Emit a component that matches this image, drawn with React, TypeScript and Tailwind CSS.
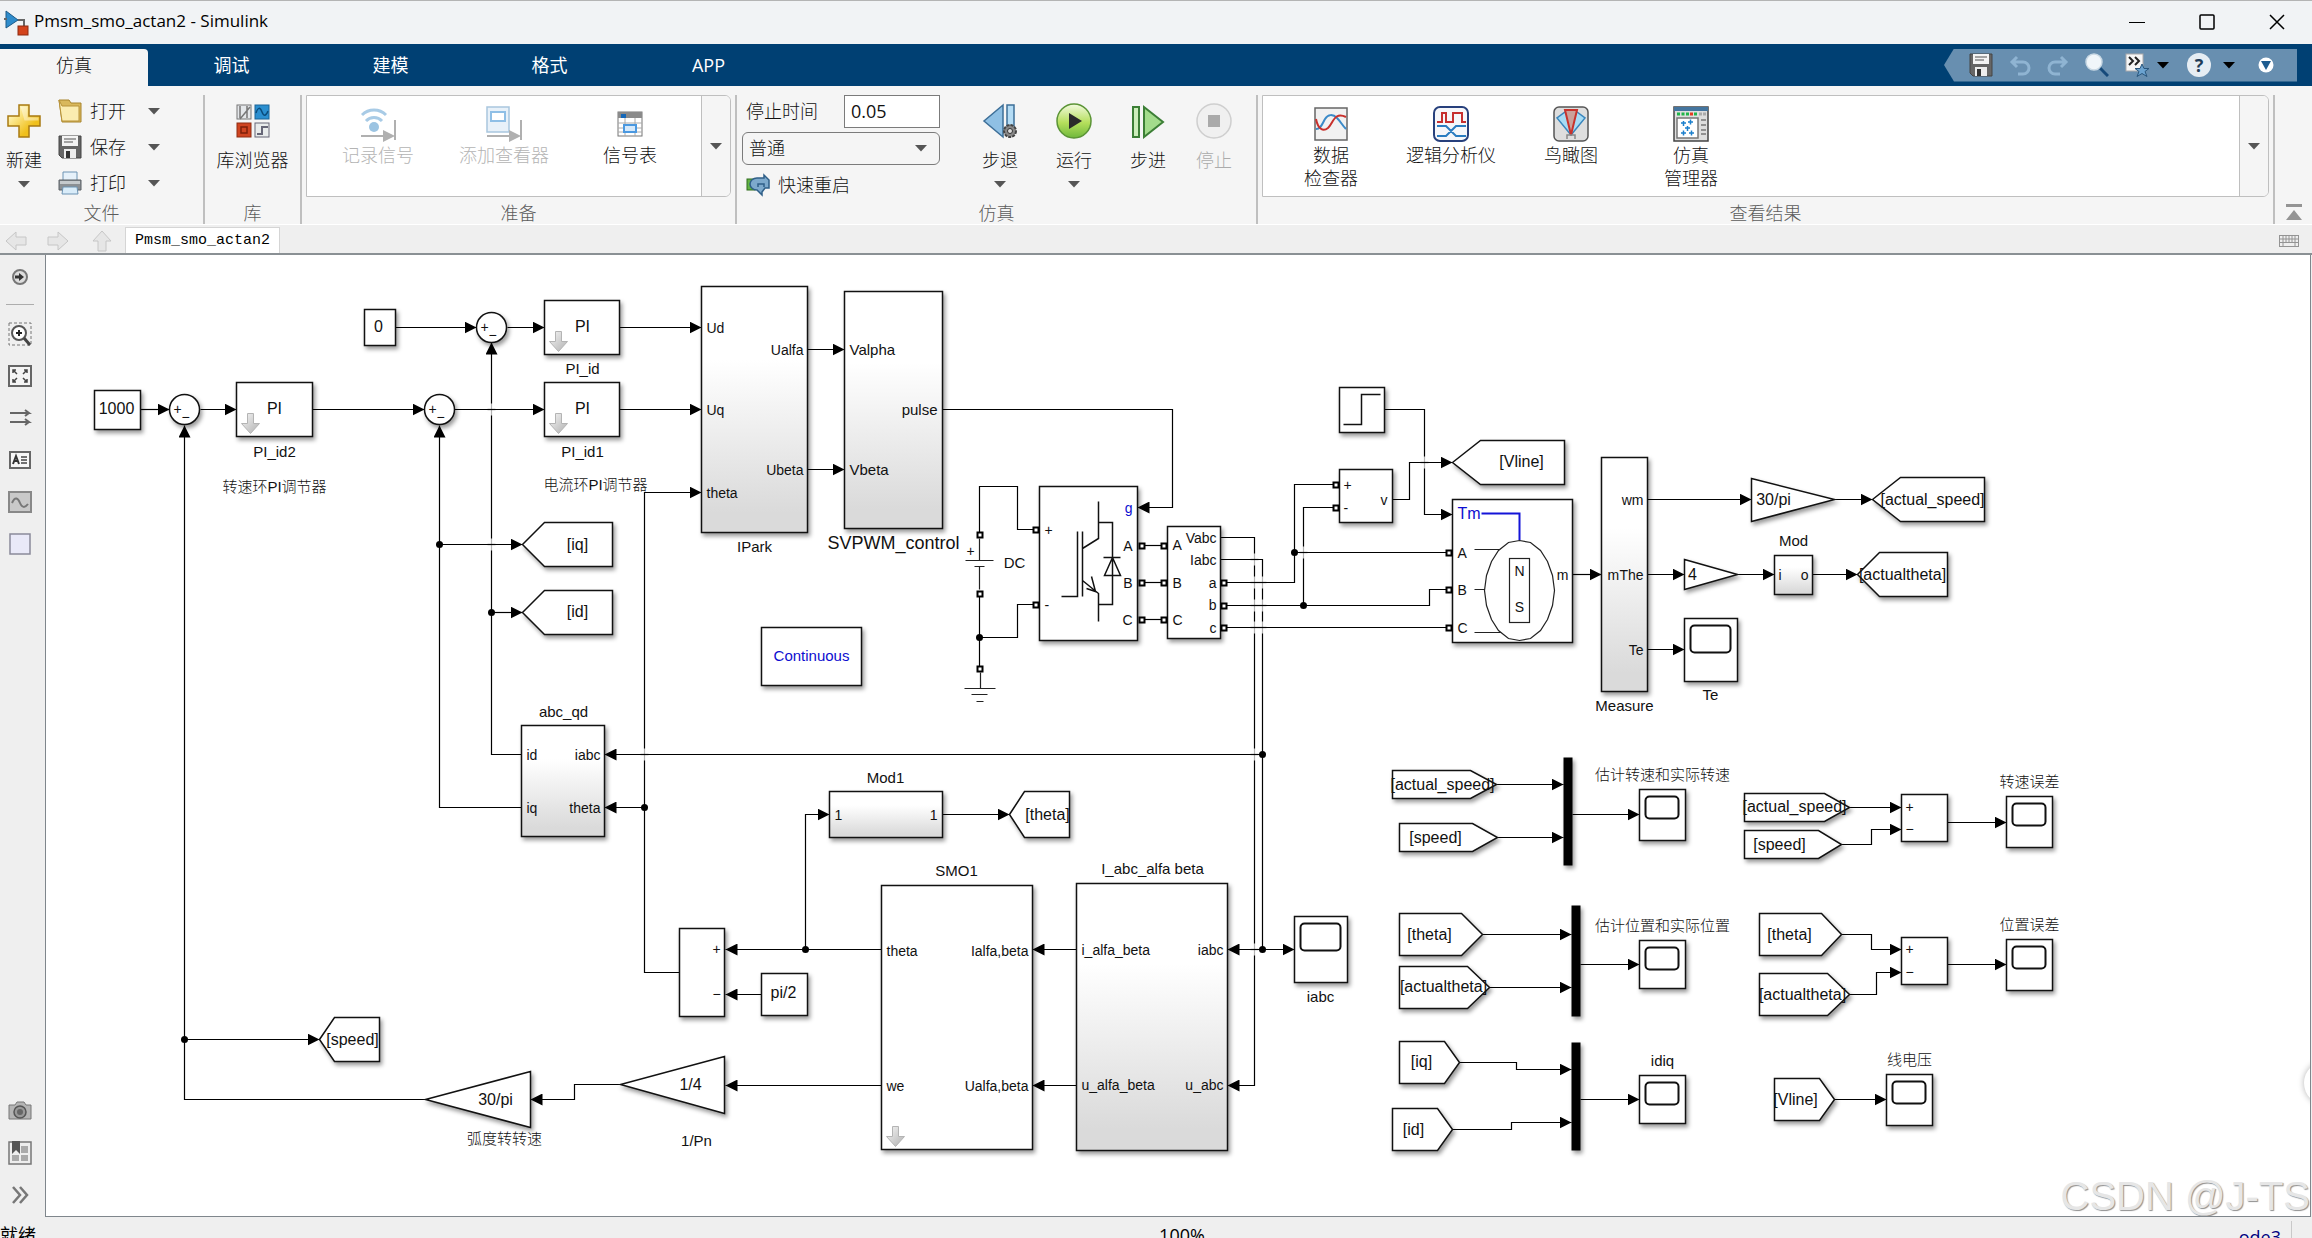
import { useState } from 'react';
import type { ReactNode } from 'react';

type Point = [number, number];

// ---------------------------------------------------------------- diagram data

interface Box {
  x: number;
  y: number;
  w: number;
  h: number;
  shaded?: boolean;
  mask?: boolean;
}

const boxes: Box[] = [
  { x: 365, y: 310, w: 31, h: 36 },
  { x: 545, y: 301, w: 75, h: 54, mask: true },
  { x: 95, y: 391, w: 46, h: 39 },
  { x: 237, y: 383, w: 76, h: 54, mask: true },
  { x: 545, y: 383, w: 75, h: 54, mask: true },
  { x: 702, y: 287, w: 106, h: 246, shaded: true },
  { x: 845, y: 292, w: 98, h: 237, shaded: true },
  { x: 1040, y: 487, w: 98, h: 154 },
  { x: 1168, y: 527, w: 53, h: 112 },
  { x: 762, y: 628, w: 100, h: 58 },
  { x: 1340, y: 388, w: 45, h: 45 },
  { x: 1340, y: 470, w: 53, h: 53 },
  { x: 1453, y: 500, w: 120, h: 143 },
  { x: 1602, y: 458, w: 46, h: 234, shaded: true },
  { x: 1775, y: 556, w: 38, h: 39, shaded: true },
  { x: 522, y: 726, w: 83, h: 111, shaded: true },
  { x: 680, y: 929, w: 45, h: 88 },
  { x: 762, y: 974, w: 46, h: 42 },
  { x: 830, y: 792, w: 113, h: 46, shaded: true },
  { x: 882, y: 886, w: 151, h: 264, mask: true },
  { x: 1077, y: 884, w: 151, h: 267, shaded: true },
  { x: 1902, y: 795, w: 46, h: 47 },
  { x: 1902, y: 938, w: 46, h: 47 },
];

const scopes: Box[] = [
  { x: 1685, y: 619, w: 53, h: 63 },
  { x: 1295, y: 917, w: 53, h: 66 },
  { x: 1640, y: 790, w: 46, h: 51 },
  { x: 1640, y: 941, w: 46, h: 48 },
  { x: 1640, y: 1076, w: 46, h: 48 },
  { x: 2007, y: 797, w: 46, h: 51 },
  { x: 2007, y: 940, w: 46, h: 51 },
  { x: 1887, y: 1075, w: 46, h: 51 },
];

const muxes: Box[] = [
  { x: 1564, y: 758, w: 9, h: 108 },
  { x: 1572, y: 906, w: 9, h: 111 },
  { x: 1572, y: 1043, w: 9, h: 108 },
];

// goto tags: tip on the left
const gotoTags: { tip: Point; shoulder: number; right: number; half: number }[] = [
  { tip: [523, 545], shoulder: 545, right: 613, half: 22 },
  { tip: [523, 613], shoulder: 545, right: 613, half: 22 },
  { tip: [320, 1040], shoulder: 335, right: 380, half: 22 },
  { tip: [1010, 815], shoulder: 1025, right: 1070, half: 23 },
  { tip: [1453, 463], shoulder: 1481, right: 1565, half: 22 },
  { tip: [1873, 500], shoulder: 1901, right: 1985, half: 22 },
  { tip: [1858, 575], shoulder: 1880, right: 1948, half: 22 },
];

// from tags: tip on the right
const fromTags: { left: number; shoulder: number; tip: Point; half: number }[] = [
  { left: 1393, shoulder: 1471, tip: [1497, 785], half: 14 },
  { left: 1400, shoulder: 1473, tip: [1498, 838], half: 14 },
  { left: 1745, shoulder: 1825, tip: [1850, 808], half: 14 },
  { left: 1745, shoulder: 1819, tip: [1842, 845], half: 14 },
  { left: 1400, shoulder: 1462, tip: [1483, 935], half: 21 },
  { left: 1400, shoulder: 1468, tip: [1490, 988], half: 21 },
  { left: 1760, shoulder: 1822, tip: [1842, 935], half: 21 },
  { left: 1760, shoulder: 1828, tip: [1850, 995], half: 21 },
  { left: 1400, shoulder: 1445, tip: [1460, 1063], half: 21 },
  { left: 1393, shoulder: 1438, tip: [1453, 1130], half: 21 },
  { left: 1775, shoulder: 1820, tip: [1835, 1100], half: 21 },
];

const gains: string[] = [
  '1752,479 1835,500 1752,522',
  '1685,560 1738,575 1685,590',
  '531,1072 426,1100 531,1128',
  '725,1057 621,1085 725,1114',
];

const sums: Point[] = [[492, 328], [185, 410], [440, 410]];

// arrow wires
const wires: Point[][] = [
  [[396, 328], [477, 328]],
  [[508, 328], [545, 328]],
  [[620, 328], [702, 328]],
  [[141, 410], [170, 410]],
  [[201, 410], [237, 410]],
  [[313, 410], [425, 410]],
  [[455, 410], [545, 410]],
  [[620, 410], [702, 410]],
  [[808, 350], [845, 350]],
  [[808, 470], [845, 470]],
  [[943, 410], [1173, 410], [1173, 508], [1138, 508]],
  [[680, 973], [645, 973], [645, 493], [702, 493]],
  [[645, 808], [605, 808]],
  [[522, 755], [492, 755], [492, 343]],
  [[522, 808], [440, 808], [440, 426]],
  [[440, 545], [523, 545]],
  [[492, 613], [523, 613]],
  [[426, 1100], [185, 1100], [185, 426]],
  [[185, 1040], [320, 1040]],
  [[621, 1085], [575, 1085], [575, 1100], [531, 1100]],
  [[882, 1086], [726, 1086]],
  [[882, 950], [726, 950]],
  [[762, 995], [726, 995]],
  [[806, 950], [806, 815], [830, 815]],
  [[943, 815], [1010, 815]],
  [[1077, 950], [1033, 950]],
  [[1077, 1086], [1033, 1086]],
  [[1221, 538], [1255, 538], [1255, 1086], [1228, 1086]],
  [[1221, 560], [1263, 560], [1263, 950], [1295, 950]],
  [[1263, 950], [1228, 950]],
  [[1263, 755], [605, 755]],
  [[1385, 410], [1425, 410], [1425, 515], [1453, 515]],
  [[1393, 500], [1410, 500], [1410, 463], [1453, 463]],
  [[1573, 575], [1602, 575]],
  [[1648, 500], [1752, 500]],
  [[1835, 500], [1873, 500]],
  [[1648, 575], [1685, 575]],
  [[1738, 575], [1775, 575]],
  [[1813, 575], [1858, 575]],
  [[1648, 650], [1685, 650]],
  [[1497, 785], [1564, 785]],
  [[1498, 838], [1564, 838]],
  [[1573, 815], [1640, 815]],
  [[1850, 808], [1902, 808]],
  [[1842, 845], [1872, 845], [1872, 830], [1902, 830]],
  [[1948, 823], [2007, 823]],
  [[1483, 935], [1572, 935]],
  [[1490, 988], [1572, 988]],
  [[1581, 965], [1640, 965]],
  [[1842, 935], [1872, 935], [1872, 950], [1902, 950]],
  [[1850, 995], [1877, 995], [1877, 973], [1902, 973]],
  [[1948, 965], [2007, 965]],
  [[1460, 1063], [1517, 1063], [1517, 1070], [1572, 1070]],
  [[1453, 1130], [1512, 1130], [1512, 1123], [1572, 1123]],
  [[1581, 1100], [1640, 1100]],
  [[1835, 1100], [1887, 1100]],
];

// electrical connections, no arrow
const conductors: Point[][] = [
  [[980, 535], [980, 487], [1018, 487], [1018, 530], [1036, 530]],
  [[980, 594], [980, 669]],
  [[980, 638], [1018, 638], [1018, 605], [1036, 605]],
  [[1141, 546], [1164, 546]],
  [[1141, 583], [1164, 583]],
  [[1141, 620], [1164, 620]],
  [[1224, 583], [1295, 583], [1295, 485], [1336, 485]],
  [[1295, 553], [1449, 553]],
  [[1224, 606], [1430, 606], [1430, 590], [1449, 590]],
  [[1304, 606], [1304, 508], [1336, 508]],
  [[1224, 628], [1449, 628]],
];

const crossings: Point[] = [
  [492, 410], [492, 545], [645, 755], [1255, 560], [1255, 583], [1263, 583],
  [1255, 606], [1263, 606], [1255, 628], [1263, 628], [1255, 755], [1255, 950],
  [1425, 463], [1304, 553],
];

const dots: Point[] = [
  [440, 545], [492, 613], [185, 1040], [645, 808], [806, 950], [1263, 755],
  [1263, 950], [980, 638], [1295, 553], [1304, 606],
];

const ports: Point[] = [
  [980, 535], [980, 594], [980, 669], [1036, 530], [1036, 605],
  [1142, 546], [1142, 583], [1142, 620], [1164, 546], [1164, 583], [1164, 620],
  [1224, 583], [1224, 606], [1224, 628], [1336, 485], [1336, 508],
  [1449, 553], [1449, 590], [1449, 628],
];

type Anchor = 'start' | 'middle' | 'end';
type Label = [text: string, x: number, y: number, anchor?: Anchor, blue?: boolean];

const portLabels: Label[] = [
  ['Ud', 707, 329, 'start'],
  ['Uq', 707, 411, 'start'],
  ['theta', 707, 494, 'start'],
  ['Ualfa', 804, 351, 'end'],
  ['Ubeta', 804, 471, 'end'],
  ['id', 527, 756, 'start'],
  ['iq', 527, 809, 'start'],
  ['iabc', 601, 756, 'end'],
  ['theta', 601, 809, 'end'],
  ['1', 835, 816, 'start'],
  ['1', 938, 816, 'end'],
  ['theta', 887, 952, 'start'],
  ['we', 887, 1087, 'start'],
  ['Ialfa,beta', 1029, 952, 'end'],
  ['Ualfa,beta', 1029, 1087, 'end'],
  ['i_alfa_beta', 1082, 951, 'start'],
  ['u_alfa_beta', 1082, 1086, 'start'],
  ['iabc', 1224, 951, 'end'],
  ['u_abc', 1224, 1086, 'end'],
  ['+', 1045, 531, 'start'],
  ['-', 1045, 606, 'start'],
  ['+', 971, 552],
  ['g', 1133, 509, 'end', true],
  ['A', 1133, 547, 'end'],
  ['B', 1133, 584, 'end'],
  ['C', 1133, 621, 'end'],
  ['A', 1173, 546, 'start'],
  ['B', 1173, 584, 'start'],
  ['C', 1173, 621, 'start'],
  ['Vabc', 1217, 539, 'end'],
  ['Iabc', 1217, 561, 'end'],
  ['a', 1217, 584, 'end'],
  ['b', 1217, 606, 'end'],
  ['c', 1217, 629, 'end'],
  ['+', 1344, 486, 'start'],
  ['-', 1344, 509, 'start'],
  ['v', 1388, 501, 'end'],
  ['A', 1458, 554, 'start'],
  ['B', 1458, 591, 'start'],
  ['C', 1458, 629, 'start'],
  ['m', 1569, 576, 'end'],
  ['m', 1608, 576, 'start'],
  ['wm', 1644, 501, 'end'],
  ['The', 1644, 576, 'end'],
  ['Te', 1644, 651, 'end'],
  ['i', 1779, 576, 'start'],
  ['o', 1809, 576, 'end'],
  ['N', 1520, 572],
  ['S', 1520, 608],
  ['+', 717, 950],
  ['−', 717, 995],
  ['+', 1910, 808],
  ['−', 1910, 830],
  ['+', 1910, 950],
  ['−', 1910, 973],
  ['+', 485, 328],
  ['−', 493, 336],
  ['+', 178, 410],
  ['−', 186, 418],
  ['+', 433, 410],
  ['−', 441, 418],
];

const nameLabels: Label[] = [
  ['PI_id', 583, 370],
  ['PI_id1', 583, 453],
  ['PI_id2', 275, 453],
  ['转速环PI调节器', 275, 488],
  ['电流环PI调节器', 596, 486],
  ['IPark', 755, 548],
  ['Valpha', 850, 351, 'start'],
  ['Vbeta', 850, 471, 'start'],
  ['pulse', 938, 411, 'end'],
  ['DC', 1015, 564],
  ['Continuous', 812, 657, 'middle', true],
  ['Measure', 1625, 707],
  ['Mod', 1794, 542],
  ['Te', 1711, 696],
  ['abc_qd', 564, 713],
  ['弧度转转速', 505, 1140],
  ['1/Pn', 697, 1142],
  ['Mod1', 886, 779],
  ['SMO1', 957, 872],
  ['I_abc_alfa beta', 1153, 870],
  ['iabc', 1321, 998],
  ['估计转速和实际转速', 1663, 776],
  ['估计位置和实际位置', 1663, 927],
  ['idiq', 1663, 1062],
  ['转速误差', 2030, 783],
  ['位置误差', 2030, 926],
  ['线电压', 1910, 1061],
];

const valueLabels: Label[] = [
  ['0', 379, 328],
  ['1000', 117, 410],
  ['PI', 583, 328],
  ['PI', 275, 410],
  ['PI', 583, 410],
  ['[iq]', 578, 546],
  ['[id]', 578, 613],
  ['[speed]', 353, 1041],
  ['30/pi', 496, 1101],
  ['1/4', 691, 1086],
  ['pi/2', 784, 994],
  ['[theta]', 1048, 816],
  ['[Vline]', 1522, 463],
  ['30/pi', 1774, 501],
  ['[actual_speed]', 1933, 501],
  ['4', 1693, 576],
  ['[actualtheta]', 1903, 576],
  ['Tm', 1458, 515, 'start', true],
  ['[actual_speed]', 1443, 786],
  ['[speed]', 1436, 839],
  ['[actual_speed]', 1795, 808],
  ['[speed]', 1780, 846],
  ['[theta]', 1430, 936],
  ['[actualtheta]', 1444, 988],
  ['[theta]', 1790, 936],
  ['[actualtheta]', 1803, 996],
  ['[iq]', 1422, 1063],
  ['[id]', 1414, 1131],
  ['[Vline]', 1796, 1101],
];

const rotor = Array.from({ length: 20 }, (_, i) => {
  const a = (i * Math.PI) / 10;
  return `${Math.round(1520 + 35 * Math.sin(a))},${Math.round(591 - 50 * Math.cos(a))}`;
}).join(' ');

const toPoints = (points: Point[]) => points.map((p) => p.join(',')).join(' ');

function Labels({ items, className }: { items: Label[]; className: string }) {
  return (
    <g className={className} dominantBaseline="central">
      {items.map(([text, x, y, anchor = 'middle', blue], i) => (
        <text key={i} x={x} y={y} textAnchor={anchor} fill={blue ? '#0d0dd0' : '#111'}>
          {text}
        </text>
      ))}
    </g>
  );
}

function Diagram() {
  return (
    <svg
      viewBox="46 255 2264 961"
      className="block h-[961px] w-[2264px] shrink-0 font-['Liberation_Sans','Noto_Sans_CJK_SC',sans-serif]"
      aria-label="Pmsm_smo_actan2"
    >
      <defs>
        <linearGradient id="subsystem" x1="0" y1="0" x2="0" y2="1">
          <stop offset="0.3" stopColor="#fff" />
          <stop offset="0.92" stopColor="#dadada" />
        </linearGradient>
        <linearGradient id="maskArrow" x1="0" y1="0" x2="1" y2="1">
          <stop offset="0.2" stopColor="#e8e8e8" />
          <stop offset="1" stopColor="#b0b0b0" />
        </linearGradient>
        <marker id="arrow" viewBox="0 0 12 12" refX="12" refY="6" markerWidth="12" markerHeight="12" markerUnits="userSpaceOnUse" orient="auto">
          <path d="M0 0L12 6L0 12Z" />
        </marker>
      </defs>

      <g transform="translate(-.5 -.5)">
        <g fill="none" stroke="#000" strokeWidth="1.2">
          {wires.map((w, i) => (
            <polyline key={i} points={toPoints(w)} markerEnd="url(#arrow)" />
          ))}
          {conductors.map((w, i) => (
            <polyline key={i} points={toPoints(w)} />
          ))}
        </g>
        {crossings.map(([x, y], i) => (
          <g key={i}>
            <rect x={x - 2} y={y - 6} width="4" height="12" fill="#fff" fillOpacity="0.7" />
            <path d={`M${x - 4} ${y}h8`} stroke="#000" strokeWidth="1.2" />
          </g>
        ))}
        {dots.map(([x, y], i) => (
          <circle key={i} cx={x} cy={y} r="3.5" />
        ))}

        {/* block bodies */}
        <g stroke="#111" strokeWidth="1.5" fill="#fff" className="drop-shadow-[2px_3px_2px_rgba(0,0,0,0.4)]">
          {boxes.map((b, i) => (
            <rect key={i} x={b.x} y={b.y} width={b.w} height={b.h} fill={b.shaded ? 'url(#subsystem)' : '#fff'} />
          ))}
          {scopes.map((b, i) => (
            <rect key={i} x={b.x} y={b.y} width={b.w} height={b.h} />
          ))}
          {muxes.map((b, i) => (
            <rect key={i} x={b.x} y={b.y} width={b.w} height={b.h} fill="#000" stroke="none" />
          ))}
          {gotoTags.map(({ tip: [x, y], shoulder, right, half }, i) => (
            <polygon key={i} points={`${x},${y} ${shoulder},${y - half} ${right},${y - half} ${right},${y + half} ${shoulder},${y + half}`} />
          ))}
          {fromTags.map(({ left, shoulder, tip: [x, y], half }, i) => (
            <polygon key={i} points={`${left},${y - half} ${shoulder},${y - half} ${x},${y} ${shoulder},${y + half} ${left},${y + half}`} />
          ))}
          {gains.map((points) => (
            <polygon key={points} points={points} />
          ))}
          {sums.map(([x, y]) => (
            <circle key={x} cx={x} cy={y} r="15" />
          ))}
        </g>

        {scopes.map((b, i) => (
          <rect key={i} x={b.x + 6} y={b.y + 7} width={b.w - 13} height={b.w > 50 ? 27 : 22} rx="4" fill="none" stroke="#111" strokeWidth="2" />
        ))}
        {boxes.filter((b) => b.mask).map((b, i) => (
          <path
            key={i}
            transform={`translate(${b.x + 5} ${b.y + b.h - 23})`}
            d="M6 0h6v10h6l-9 10l-9 -10h6z"
            fill="url(#maskArrow)"
            stroke="#b4b4b4"
          />
        ))}
        {ports.map(([x, y], i) => (
          <rect key={i} x={x - 2} y={y - 2} width="5" height="5" fill="#fff" stroke="#000" strokeWidth="2" />
        ))}

        {/* battery and ground */}
        <g stroke="#222" strokeWidth="1.2" fill="none">
          <path d="M980 539V561M966 561H994M975 567H985M980 567V590" />
          <path d="M981 673V689M965 689H996M972 695H988M977 702H984" />
        </g>

        {/* inverter leg */}
        <g stroke="#111" strokeWidth="1.5" fill="none">
          <path d="M1099 502V539L1083 549M1062 597H1078V532M1083 532V597M1083 581L1099 594V622M1087 589L1096 592L1092 577" />
          <path d="M1099 523H1113V605H1099M1104 558H1121M1113 558L1105 576H1121Z" />
        </g>

        {/* step source */}
        <path d="M1344 425H1362V395H1381" fill="none" stroke="#111" strokeWidth="1.5" />

        {/* machine */}
        <path d="M1482 514H1520V541" fill="none" stroke="#1414d8" strokeWidth="2" />
        <g stroke="#222" strokeWidth="1.2" fill="none">
          <path d="M1475 550H1503M1475 590H1485M1475 633H1503" />
          <polygon points={rotor} fill="#fff" />
          <rect x="1510" y="559" width="20" height="64" />
        </g>

        <g transform="translate(0 -1)">
          <Labels items={portLabels} className="text-[14px]" />
          <Labels items={nameLabels} className="text-[15px] font-light" />
          <Labels items={valueLabels} className="text-[16px]" />
          <Labels items={[['SVPWM_control', 894, 544]]} className="text-[18px]" />
        </g>
      </g>
    </svg>
  );
}

// ---------------------------------------------------------------- icons

function Caret({ className = 'text-[#555]' }: { className?: string }) {
  return (
    <svg viewBox="0 0 12 7" className={`h-[7px] w-3 shrink-0 ${className}`} fill="currentColor" aria-hidden="true">
      <path d="M0 0h12L6 6.5z" />
    </svg>
  );
}

function Icon({ size = 24, view = 24, children }: { size?: number; view?: number; children: ReactNode }) {
  return (
    <svg width={size} height={size} viewBox={`0 0 ${view} ${view}`} className="shrink-0" fill="none" aria-hidden="true">
      {children}
    </svg>
  );
}

const SaveIcon = () => (
  <Icon>
    <path d="M1 1h22v22H4l-3-3z" fill="#666" stroke="#444" />
    <path d="M4 1h16v10H4z" fill="#f4f4f4" />
    <path d="M6 4h12M6 7h9" stroke="#888" strokeWidth="1.5" />
    <path d="M6 14h12v9H6z" fill="#eee" />
    <path d="M8 16h4v7H8z" fill="#333" />
  </Icon>
);

const NewIcon = () => (
  <Icon size={34} view={34}>
    <path d="M12 1h10v11h11v10H22v11H12V22H1V12h11z" fill="url(#gold)" stroke="#a87a12" strokeWidth="1.5" />
    <path d="M13.5 2.5h7v11h11v3h-14z" fill="#fff" fillOpacity="0.4" />
    <defs>
      <linearGradient id="gold" x1="0" y1="0" x2="1" y2="1">
        <stop offset="0.2" stopColor="#fff3b0" />
        <stop offset="0.7" stopColor="#f0c01c" />
      </linearGradient>
    </defs>
  </Icon>
);

const OpenIcon = () => (
  <Icon>
    <path d="M1 1h10l2 3h10v19H4z" fill="#d9b85c" stroke="#a8842c" />
    <path d="M1 1l3 6h17v15H4z" fill="#fbecb0" stroke="#b8933a" />
  </Icon>
);

const PrintIcon = () => (
  <Icon>
    <path d="M5 1h14v9H5z" fill="#e6f1fa" stroke="#6d93b3" />
    <path d="M1 9h22v10H1z" fill="#8b8f93" stroke="#5b6066" />
    <path d="M2 10h20v3H2z" fill="#c5c9cc" />
    <path d="M5 16h14l1 7H4z" fill="#d9ecf9" stroke="#6d93b3" />
  </Icon>
);

const LibraryIcon = () => (
  <Icon size={34} view={34}>
    <rect x="1" y="1" width="14" height="14" fill="#e4e7ea" stroke="#777" />
    <path d="M4 15L14 3M4 2v12M11 2v12" stroke="#777" strokeWidth="1.5" />
    <rect x="19" y="1" width="14" height="14" fill="#2b8fd0" stroke="#1b6598" />
    <path d="M20 9c2-6 4-6 6-1s4 4 6-1" stroke="#0b4c7c" strokeWidth="1.5" />
    <rect x="1" y="19" width="14" height="14" fill="#cf4420" stroke="#8f2c12" />
    <rect x="5" y="23" width="6" height="6" stroke="#7d1f08" strokeWidth="1.5" />
    <rect x="19" y="19" width="14" height="14" fill="#e9ecec" stroke="#667" />
    <path d="M21 30h5v-7h6" stroke="#667" strokeWidth="2" />
  </Icon>
);

const LogSignalIcon = () => (
  <Icon size={36} view={36}>
    <path d="M2 9a17 17 0 0 1 24 0M6 15a11 11 0 0 1 16 0" stroke="#a8cbe6" strokeWidth="3" />
    <circle cx="14" cy="21" r="5" fill="#9cc4e2" />
    <path d="M1 30h24M35 14v20" stroke="#b0b0b0" strokeWidth="2" />
    <path d="M23 24l12 6l-12 6z" fill="#b0b0b0" />
  </Icon>
);

const AddViewerIcon = () => (
  <Icon size={36} view={36}>
    <rect x="1" y="1" width="22" height="25" fill="#e8f1f9" stroke="#a9c6de" strokeWidth="1.5" />
    <rect x="5" y="6" width="14" height="9" fill="#fff" stroke="#8fbfe6" strokeWidth="2" />
    <path d="M1 30h24M35 14v20" stroke="#b0b0b0" strokeWidth="2" />
    <path d="M23 24l12 6l-12 6z" fill="#b0b0b0" />
  </Icon>
);

const SignalTableIcon = () => (
  <Icon size={26} view={26}>
    <rect x="1" y="1" width="24" height="24" fill="#fff" stroke="#777" />
    <rect x="1" y="1" width="24" height="6" fill="#8a8a8a" />
    <rect x="4" y="3" width="5" height="4" fill="#1668b8" />
    <path d="M1 12h24M1 17h24M1 21h24M8 7v18M18 7v18" stroke="#aaa" />
    <rect x="7" y="14" width="12" height="7" fill="#d5e9fb" stroke="#4a98e0" strokeWidth="2" />
  </Icon>
);

const RestartIcon = () => (
  <Icon>
    <rect x="1" y="6" width="8" height="11" fill="#63b445" stroke="#2f6c1d" />
    <path d="M11 5h7V2l5 5v8h-4l-3 4v3l-5-5a7 6 0 0 1 0-12z" fill="#7da9cc" stroke="#2f5f88" strokeWidth="1.5" />
    <path d="M12 14v-3h6v3" stroke="#2f5f88" strokeWidth="1.5" />
  </Icon>
);

const StepBackIcon = () => (
  <Icon size={36} view={36}>
    <path d="M21 2v32L2 18z" fill="#8fc0e4" stroke="#3d6f98" strokeWidth="1.5" />
    <rect x="25" y="2" width="7" height="24" fill="#b4dcf5" stroke="#3d6f98" strokeWidth="1.5" />
    <circle cx="28" cy="28" r="6" fill="#888" stroke="#444" strokeWidth="2" strokeDasharray="3 1" />
    <circle cx="28" cy="28" r="2.5" fill="#ddd" stroke="#333" />
  </Icon>
);

const RunIcon = () => (
  <Icon size={36} view={36}>
    <defs>
      <linearGradient id="run" x1="0" y1="0" x2="0" y2="1">
        <stop offset="0" stopColor="#f2fadf" />
        <stop offset="0.55" stopColor="#b5df5c" />
        <stop offset="1" stopColor="#6fb83c" />
      </linearGradient>
    </defs>
    <circle cx="18" cy="18" r="17" fill="url(#run)" stroke="#5b9436" strokeWidth="1.5" />
    <path d="M13 10l13 8l-13 8z" fill="#2a2a2a" />
  </Icon>
);

const StepForwardIcon = () => (
  <Icon size={36} view={36}>
    <rect x="3" y="4" width="6" height="30" fill="#cdeebb" stroke="#3c7f36" strokeWidth="2" />
    <path d="M14 4v30L33 19z" fill="#a3dc8c" stroke="#3c7f36" strokeWidth="2" />
  </Icon>
);

const StopIcon = () => (
  <Icon size={36} view={36}>
    <circle cx="18" cy="18" r="17" fill="#f0f0f0" stroke="#cfcfcf" strokeWidth="1.5" />
    <rect x="12" y="12" width="12" height="12" fill="#aaa" />
  </Icon>
);

const DataInspectorIcon = () => (
  <Icon size={34} view={34}>
    <rect x="1" y="1" width="32" height="32" fill="#f1f1f1" stroke="#666" strokeWidth="1.5" />
    <path d="M2 22c5 0 6-5 9-10s8-5 12-1s5 7 9 11" stroke="#3b8ac8" strokeWidth="2" />
    <path d="M2 12c2 10 7 13 12 9s6-17 18-11" stroke="#c8302c" strokeWidth="2" />
  </Icon>
);

const LogicIcon = () => (
  <Icon size={36} view={36}>
    <rect x="1" y="1" width="34" height="34" rx="6" fill="#f6f7fa" stroke="#27407c" strokeWidth="2" />
    <path d="M4 16h5V7h4v9h7V7h9v9h4" stroke="#c62f2f" strokeWidth="2" />
    <path d="M4 20h9l10 10h10M4 30h9l10-10h10" stroke="#2a7cc0" strokeWidth="2" />
  </Icon>
);

const BirdsEyeIcon = () => (
  <Icon size={36} view={36}>
    <rect x="1" y="1" width="34" height="34" rx="5" fill="#dedede" stroke="#555" strokeWidth="1.5" />
    <path d="M18 29L4 12l8-6h12l8 6z" fill="#a7dcf5" stroke="#3a86bd" strokeWidth="1.5" />
    <path d="M18 29L12 4h12z" fill="#cba19a" stroke="#c9332c" strokeWidth="2" />
    <path d="M14 33v-4h8v4" stroke="#888" strokeWidth="1.5" />
  </Icon>
);

const SimManagerIcon = () => (
  <Icon size={36} view={36}>
    <rect x="1" y="1" width="34" height="34" fill="#dedede" stroke="#444" strokeWidth="1.5" />
    <path d="M1 1h34v4H1z" fill="#44759f" />
    <path d="M4 8h12" stroke="#1fb54a" strokeWidth="3" strokeDasharray="3 1.5" />
    <path d="M17 8h3" stroke="#e33b20" strokeWidth="3" />
    <path d="M21 8h3" stroke="#1fb54a" strokeWidth="3" />
    <path d="M26 8h7" stroke="#aaa" strokeWidth="3" strokeDasharray="3 1" />
    <rect x="4" y="12" width="21" height="20" fill="#fff" stroke="#777" strokeWidth="1.5" />
    <path d="M8 17h5M10.5 15v5M15 16h5M17.5 13.500v5M12 22h5M14.5 20v5M8 27h5M10.5 24.500v5M16 27h5M18.5 24.500v5" stroke="#1b7fcc" strokeWidth="1.5" />
    <path d="M28 14h5M28 19h5M28 24h5M28 28h5" stroke="#777" strokeWidth="1.5" />
  </Icon>
);

function NavArrow({ rotate }: { rotate: string }) {
  return (
    <svg viewBox="0 0 22 20" className={`h-5 w-[22px] ${rotate}`} aria-hidden="true">
      <path d="M1 10L11 1v5h10v8H11v5z" fill="#e6e6e6" stroke="#c6c6c6" />
    </svg>
  );
}

// ---------------------------------------------------------------- chrome

function TitleBar() {
  return (
    <header className="flex h-11 shrink-0 items-center border-t border-[#b4b4b4] bg-[#f1f3f5] pl-1">
      <Icon size={26} view={26}>
        <path d="M2 1v17l12-8z" fill="#2f8ccc" stroke="#1c5a88" />
        <path d="M0 9h3M14 10h6v10" stroke="#666" strokeWidth="2" />
        <rect x="14" y="16" width="10" height="9" fill="#d3431c" stroke="#8d2a10" />
      </Icon>
      <h1 className="mb-1 ml-1 text-[17px] text-black">Pmsm_smo_actan2 - Simulink</h1>
      <div className="mb-[2px] ml-auto flex">
        <button aria-label="最小化" className="flex h-10 w-[70px] items-center justify-center">
          <Icon size={16} view={16}><path d="M0 8.5h16" stroke="#000" /></Icon>
        </button>
        <button aria-label="最大化" className="flex h-10 w-[70px] items-center justify-center">
          <Icon size={16} view={16}><rect x="1" y="1" width="14" height="14" rx="1" stroke="#000" strokeWidth="1.5" /></Icon>
        </button>
        <button aria-label="关闭" className="flex h-10 w-[70px] items-center justify-center">
          <Icon size={16} view={16}><path d="M1 1l14 14M15 1L1 15" stroke="#000" strokeWidth="1.5" /></Icon>
        </button>
      </div>
    </header>
  );
}

function QuickAccess() {
  return (
    <div className="mr-[15px] ml-auto flex h-[33px] w-[353px] items-center bg-[#688fb0] pl-[25px] [clip-path:polygon(10px_0,100%_0,100%_100%,10px_100%,0_50%)]">
      <button aria-label="保存"><SaveIcon /></button>
      <button aria-label="撤销" className="ml-4">
        <Icon><path d="M3 9h11a6 6 0 0 1 0 12H9M8 4L3 9l5 5" stroke="#8fb4d2" strokeWidth="3" /></Icon>
      </button>
      <button aria-label="重做" className="ml-3">
        <Icon><path d="M21 9H10a6 6 0 0 0 0 12h5M16 4l5 5l-5 5" stroke="#8fb4d2" strokeWidth="3" /></Icon>
      </button>
      <button aria-label="查找" className="ml-4">
        <Icon>
          <path d="M14 14l9 9" stroke="#164a7a" strokeWidth="3" />
          <circle cx="9" cy="9" r="8" fill="#f0f6fa" stroke="#c8d8e4" strokeWidth="1.5" />
        </Icon>
      </button>
      <button aria-label="收藏" className="ml-4 flex items-center gap-2">
        <Icon>
          <rect x="1" y="1" width="17" height="17" fill="#f6f6f6" stroke="#aaa" />
          <path d="M4 4l4 4l-4 4M10 4l4 4l-4 4" stroke="#222" strokeWidth="2" />
          <path d="M17 11l2 4.500h5l-4 3l2 5l-5-3l-5 3l2-5l-4-3h5z" fill="#6ba3d0" stroke="#28567c" />
        </Icon>
        <Caret className="text-black" />
      </button>
      <button aria-label="帮助" className="ml-[18px] flex items-center gap-3">
        <span className="flex size-6 items-center justify-center rounded-full bg-[#e6edf3] text-[18px] leading-none font-bold text-[#1f3c58]">?</span>
        <Caret className="text-black" />
      </button>
      <button aria-label="更多" className="ml-[22px]">
        <Icon size={18} view={18}>
          <circle cx="9" cy="9" r="7.5" fill="#fff" />
          <path d="M4 5h10l-5 9z" fill="#1d5c90" />
        </Icon>
      </button>
    </div>
  );
}

const tabs = ['仿真', '调试', '建模', '格式', 'APP'];

function TabBar() {
  const [active, setActive] = useState('仿真');
  return (
    <nav className="flex h-[42px] shrink-0 items-center bg-[#004073]">
      <div className="flex h-full items-end" role="tablist">
        {tabs.map((tab, i) => (
          <button
            key={tab}
            role="tab"
            aria-selected={tab === active}
            onClick={() => setActive(tab)}
            className={`flex h-[37px] items-center justify-center pb-1 text-[18px] ${i === 0 ? 'mr-1 w-[148px]' : 'w-[159px]'} ${
              tab === active ? 'rounded-tr bg-[#f5f5f5] font-light text-[#111]' : 'text-white'
            }`}
          >
            {tab}
          </button>
        ))}
      </div>
      <QuickAccess />
    </nav>
  );
}

function Group({ title, className, children }: { title: string; className: string; children: ReactNode }) {
  return (
    <section className={`flex flex-col border-r-2 border-[#bfbfbf] ${className}`}>
      <div className="flex h-[107px]">{children}</div>
      <h2 className="text-center text-[18px] leading-[22px] text-[#5c5c5c]">{title}</h2>
    </section>
  );
}

function FileRow({ icon, label }: { icon: ReactNode; label: string }) {
  return (
    <button className="flex h-9 items-center">
      {icon}
      <span className="ml-2 w-[58px] text-left">{label}</span>
      <Caret />
    </button>
  );
}

function BigButton({ icon, label, caret, disabled, className }: { icon: ReactNode; label: string; caret?: boolean; disabled?: boolean; className: string }) {
  return (
    <button disabled={disabled} className={`flex flex-col items-center pt-2 ${disabled ? 'text-[#ababab]' : ''} ${className}`}>
      <span className="flex h-9 items-center">{icon}</span>
      <span className="mt-[10px] leading-[22px]">{label}</span>
      {caret && <span className="mt-[10px]"><Caret /></span>}
    </button>
  );
}

function GalleryItem({ icon, label, disabled, className }: { icon: ReactNode; label: string; disabled?: boolean; className: string }) {
  return (
    <button disabled={disabled} className={`flex flex-col items-center pt-[10px] ${disabled ? 'text-[#b4b4b4]' : ''} ${className}`}>
      <span className="flex h-9 items-center">{icon}</span>
      <span className="mt-[2px] leading-[23px] whitespace-pre-line">{label}</span>
    </button>
  );
}

function Gallery({ children }: { children: ReactNode }) {
  return (
    <div className="mr-1 ml-1 flex h-[102px] flex-1 overflow-hidden rounded-r-md border border-[#bfbfbf] bg-white">
      {children}
      <button aria-label="展开" className="ml-auto flex w-[29px] items-center justify-center border-l border-[#bfbfbf] bg-[#f5f5f5]">
        <Caret />
      </button>
    </div>
  );
}

function Ribbon() {
  return (
    <div className="flex h-[138px] shrink-0 bg-[#f5f5f5] pt-[9px] text-[18px] font-light text-[#111]">
      <Group title="文件" className="w-[205px]">
        <BigButton icon={<NewIcon />} label="新建" caret className="mr-[10px] w-12" />
        <div className="-mt-[2px]">
          <FileRow icon={<OpenIcon />} label="打开" />
          <FileRow icon={<SaveIcon />} label="保存" />
          <FileRow icon={<PrintIcon />} label="打印" />
        </div>
      </Group>

      <Group title="库" className="w-[97px]">
        <BigButton icon={<LibraryIcon />} label="库浏览器" className="mx-auto w-20" />
      </Group>

      <Group title="准备" className="w-[435px]">
        <Gallery>
          <GalleryItem icon={<LogSignalIcon />} label="记录信号" disabled className="ml-2 w-[126px]" />
          <GalleryItem icon={<AddViewerIcon />} label="添加查看器" disabled className="w-[126px]" />
          <GalleryItem icon={<SignalTableIcon />} label="信号表" className="w-[126px]" />
        </Gallery>
      </Group>

      <Group title="仿真" className="w-[521px]">
        <div className="ml-[5px] flex w-[198px] flex-col gap-1">
          <div className="flex items-center justify-between">
            <label htmlFor="stop-time" className="ml-1">停止时间</label>
            <input id="stop-time" defaultValue="0.05" className="h-[33px] w-24 border border-[#7b7b7b] bg-white px-[6px] pb-[2px] font-normal" />
          </div>
          <div className="relative">
            <select aria-label="仿真模式" className="block h-[33px] w-full appearance-none rounded-md border border-[#7b7b7b] bg-[#f5f5f5] px-[6px]">
              <option>普通</option>
            </select>
            <span className="pointer-events-none absolute top-[13px] right-[13px] flex"><Caret /></span>
          </div>
          <button className="ml-1 flex h-8 items-center gap-2">
            <RestartIcon />
            快速重启
          </button>
        </div>
        <BigButton icon={<StepBackIcon />} label="步退" caret className="ml-6 w-[72px]" />
        <BigButton icon={<RunIcon />} label="运行" caret className="w-[76px]" />
        <BigButton icon={<StepForwardIcon />} label="步进" className="w-[72px]" />
        <BigButton icon={<StopIcon />} label="停止" disabled className="w-[60px]" />
      </Group>

      <Group title="查看结果" className="flex-1">
        <Gallery>
          <GalleryItem icon={<DataInspectorIcon />} label={'数据\n检查器'} className="ml-2 w-[120px]" />
          <GalleryItem icon={<LogicIcon />} label="逻辑分析仪" className="w-[120px]" />
          <GalleryItem icon={<BirdsEyeIcon />} label="鸟瞰图" className="w-[120px]" />
          <GalleryItem icon={<SimManagerIcon />} label={'仿真\n管理器'} className="w-[120px]" />
        </Gallery>
      </Group>

      <div className="flex w-[37px] items-end justify-center pb-1">
        <button aria-label="折叠">
          <Icon size={16} view={16}>
            <path d="M0 0h16v3H0zM8 6l8 10H0z" fill="#949494" />
          </Icon>
        </button>
      </div>
    </div>
  );
}

function Breadcrumb() {
  return (
    <div className="flex h-[29px] shrink-0 items-center border-t border-white bg-[#efefef] pt-1">
      <button aria-label="后退" className="ml-[5px]"><NavArrow rotate="" /></button>
      <button aria-label="前进" className="ml-5"><NavArrow rotate="rotate-180" /></button>
      <button aria-label="向上" className="ml-[22px]"><NavArrow rotate="rotate-90" /></button>
      <button className="ml-3 h-[26px] self-end border border-b-0 border-[#d5d5d5] bg-white px-[9px] pt-[2px] font-['Liberation_Mono',monospace] text-[15px] text-black">
        Pmsm_smo_actan2
      </button>
      <svg viewBox="0 0 20 12" className="mr-[13px] ml-auto h-3 w-5" fill="none" stroke="#949494" aria-hidden="true">
        <rect x="0.5" y="0.5" width="19" height="11" />
        <path d="M1 4h18M1 7.500h18M4 1v10M7 1v6M10 1v6M13 1v6M16 1v10" />
      </svg>
    </div>
  );
}

const paletteTop: { name: string; icon: ReactNode }[] = [
  {
    name: '缩放',
    icon: (
      <>
        <rect x="1" y="1" width="22" height="22" stroke="#777" strokeDasharray="3 2" />
        <circle cx="11" cy="11" r="7" fill="#fff" stroke="#555" strokeWidth="2" />
        <path d="M8 11h6M11 8v6" stroke="#222" strokeWidth="2" />
        <path d="M16 16l6 7" stroke="#444" strokeWidth="3" />
      </>
    ),
  },
  {
    name: '适应视图',
    icon: (
      <>
        <rect x="1" y="2" width="22" height="20" fill="#f4f4f4" stroke="#666" strokeWidth="2" />
        <path d="M5 9V6h3M5 6l4 4M19 9V6h-3M19 6l-4 4M5 15v3h3M5 18l4-4M19 15v3h-3M19 18l-4-4" stroke="#444" strokeWidth="1.5" />
      </>
    ),
  },
  {
    name: '采样时间',
    icon: <path d="M2 7h19l-4-3M21 7l-4 3M2 16h19l-4-3M21 16l-4 3" stroke="#666" strokeWidth="2" />,
  },
  {
    name: '注释',
    icon: (
      <>
        <rect x="2" y="4" width="20" height="16" fill="#f6f6f6" stroke="#666" strokeWidth="2" />
        <path d="M5 16l3-8l3 8M6 13h4" stroke="#333" strokeWidth="2" />
        <path d="M13 9h6M13 12h6M13 15h6" stroke="#444" strokeWidth="1.5" />
      </>
    ),
  },
  {
    name: '图像',
    icon: (
      <>
        <rect x="1" y="2" width="22" height="20" fill="#c9c9c9" stroke="#888" strokeWidth="2" />
        <path d="M4 13c3-7 6-5 8 0s5 5 8 1" stroke="#777" strokeWidth="2" />
      </>
    ),
  },
  {
    name: '区域',
    icon: <rect x="2" y="2" width="20" height="20" fill="#e9e9f8" stroke="#8a8a9a" strokeWidth="1.5" />,
  },
];

function Palette() {
  return (
    <aside className="flex w-[45px] shrink-0 flex-col items-center bg-[#efefef] pr-[5px]">
      <button aria-label="隐藏浏览器" className="mt-[13px]">
        <Icon size={18} view={18}>
          <circle cx="9" cy="9" r="7" fill="#ddd" stroke="#777" strokeWidth="2" />
          <path d="M4 9h6" stroke="#333" strokeWidth="3" />
          <path d="M8 5l5 4l-5 4z" fill="#333" />
        </Icon>
      </button>
      <hr className="mt-[18px] w-7 border-[#adadad]" />
      <div className="mt-[17px] flex flex-col gap-[18px]">
        {paletteTop.map(({ name, icon }) => (
          <button key={name} aria-label={name}>
            <Icon>{icon}</Icon>
          </button>
        ))}
      </div>
      <div className="mt-auto mb-[10px] flex flex-col gap-[18px]">
        <button aria-label="截图">
          <Icon>
            <path d="M1 6h6l2-3h7l2 3h5v14H1z" fill="#b4b4b4" stroke="#777" />
            <circle cx="12" cy="13" r="6" fill="#999" stroke="#555" strokeWidth="1.5" />
            <circle cx="12" cy="13" r="3" fill="#666" />
          </Icon>
        </button>
        <button aria-label="模型浏览器">
          <Icon>
            <path d="M1 1h22v22H1z" fill="#eee" stroke="#777" strokeWidth="1.5" />
            <path d="M4 14h7v6H4zM13 5h7v7h-7zM13 14h7v6h-7z" fill="#aaa" />
            <path d="M4 0h8v13l-4-4l-4 4z" fill="#555" />
          </Icon>
        </button>
        <button aria-label="更多工具">
          <Icon><path d="M5 4l7 8l-7 8M12 4l7 8l-7 8" stroke="#777" strokeWidth="2.5" /></Icon>
        </button>
      </div>
    </aside>
  );
}

export default function App() {
  return (
    <div className="flex h-screen flex-col overflow-hidden bg-[#efefef] font-['Open_Sans','Noto_Sans_CJK_SC',sans-serif]">
      <TitleBar />
      <TabBar />
      <Ribbon />
      <Breadcrumb />
      <div className="flex min-h-0 flex-1 border-t-2 border-[#8a9094]">
        <Palette />
        <main className="relative mr-px flex-1 overflow-hidden border-r border-b border-l border-[#7f868c] bg-white">
          <Diagram />
          <span className="absolute top-[806px] -right-[38px] size-[44px] rounded-full bg-white shadow-[0_0_6px_rgba(0,0,0,0.3)]" />
          <p className="absolute right-0 bottom-0 font-['Liberation_Sans',sans-serif] text-[40px] leading-[40px] whitespace-nowrap text-[#e6e6e6] [text-shadow:1px_1px_1px_#8f8f8f]">
            CSDN @J-TS
          </p>
        </main>
      </div>
      <footer className="relative flex h-[21px] shrink-0 justify-between overflow-hidden text-[18px] leading-9 text-black">
        <span>就绪</span>
        <span className="absolute inset-x-0 mr-[-52px] text-center">100%</span>
        <span className="mt-1 mr-5 border-r border-[#c9c9c9] pr-[10px] leading-8 text-[#000080]">ode3</span>
      </footer>
    </div>
  );
}
